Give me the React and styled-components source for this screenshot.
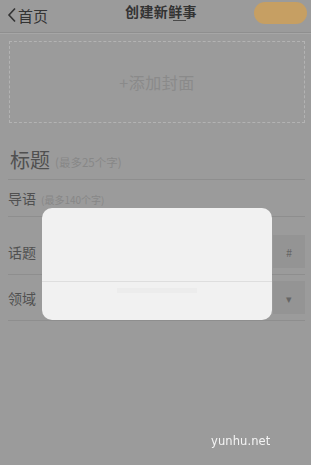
import React from "react";
import styled, { createGlobalStyle } from "styled-components";

const Global = createGlobalStyle`
  html, body { margin: 0; padding: 0; background: #9b9b9b; }
  body { font-family: "Noto Sans CJK SC", "Noto Sans", sans-serif; width: 311px; height: 465px; overflow: hidden; }
  * { box-sizing: border-box; }
`;

const Page = styled.div`
  width: 311px;
  height: 465px;
  display: flex;
  flex-direction: column;
  background: #9b9b9b;
`;

const Header = styled.header`
  height: 33px;
  display: grid;
  grid-template-columns: 1fr auto 1fr;
  align-items: center;
  padding: 0 4px 2px 7px;
  border-bottom: 1px solid #8f8f8f;
  box-shadow: 0 1px 0 #a6a6a6;
`;

const Back = styled.div`
  display: flex;
  align-items: center;
  gap: 1px;
  font-size: 15px;
  color: #333;
  line-height: 1;
`;

const Title = styled.div`
  position: relative;
  font-size: 14px;
  font-weight: 700;
  color: #333;
  letter-spacing: 0.4px;
  margin-top: -8px;
  margin-left: 8px;
`;

const Caret = styled.span`
  position: absolute;
  left: 48px;
  top: 19px;
  width: 13px;
  height: 1px;
  background: #4a4a4a;
`;

const Publish = styled.div`
  justify-self: end;
  width: 53px;
  height: 22px;
  border-radius: 11px;
  background: #c69f63;
  margin-top: -5px;
`;

const Cover = styled.div`
  margin: 8px 6px 0 9px;
  height: 82px;
  border: 1px dashed #b3b3b3;
  display: flex;
  align-items: center;
  justify-content: center;
  font-size: 16px;
  color: #8a8a8a;
  letter-spacing: 0.5px;
`;

const Field = styled.div`
  margin: 0 6px 0 8px;
  display: flex;
  align-items: center;
  height: ${(p) => p.$h}px;
  padding-top: ${(p) => p.$pt || 0}px;
  border-bottom: 1px solid #8e8e8e;
`;

const Label = styled.span`
  font-size: ${(p) => (p.$big ? 20 : 14)}px;
  color: #505050;
  padding-left: ${(p) => (p.$big ? 2 : 0)}px;
`;

const Hint = styled.span`
  font-size: ${(p) => (p.$big ? 11.5 : 10)}px;
  color: #878787;
  margin-left: 5px;
  margin-top: ${(p) => (p.$big ? 5 : 2)}px;
`;

const Spacer = styled.div`
  flex: 1;
`;

const SideBox = styled.div`
  width: 32px;
  height: 33px;
  background: #949494;
  display: flex;
  align-items: center;
  justify-content: center;
  font-size: 11px;
  color: #666;
`;

const Modal = styled.div`
  position: fixed;
  left: 42px;
  top: 208px;
  width: 230px;
  height: 112px;
  border-radius: 10px;
  background: #f1f1f1;
  display: flex;
  flex-direction: column;
  overflow: hidden;
`;

const ModalBody = styled.div`
  height: 74px;
  border-bottom: 1px solid #dedede;
`;

const ModalFoot = styled.div`
  flex: 1;
  display: flex;
  flex-direction: column;
  align-items: center;
  padding-top: 6px;
`;

const Faint = styled.div`
  width: 80px;
  height: 5px;
  background: #ececec;
`;

const Watermark = styled.div`
  position: fixed;
  left: 211px;
  top: 434px;
  font-family: "DejaVu Sans", sans-serif;
  font-size: 11.5px;
  color: #f4f4f4;
  letter-spacing: 0.1px;
`;

const Chevron = () => (
  <svg width="10" height="16" viewBox="0 0 10 16">
    <path d="M8 1.5 L2 8 L8 14.5" fill="none" stroke="#333" strokeWidth="1.6" />
  </svg>
);

export default function App() {
  return (
    <>
      <Global />
      <Page>
        <Header>
          <Back>
            <Chevron />
            首页
          </Back>
          <Title>
            创建新鲜事
            <Caret />
          </Title>
          <Publish />
        </Header>
        <Cover>+添加封面</Cover>
        <Field $h={57} $pt={16}>
          <Label $big>标题</Label>
          <Hint $big>(最多25个字)</Hint>
        </Field>
        <Field $h={37}>
          <Label>导语</Label>
          <Hint>(最多140个字)</Hint>
        </Field>
        <Field $h={58} $pt={12}>
          <Label>话题</Label>
          <Spacer />
          <SideBox>#</SideBox>
        </Field>
        <Field $h={46}>
          <Label>领域</Label>
          <Spacer />
          <SideBox>▾</SideBox>
        </Field>
      </Page>
      <Modal>
        <ModalBody />
        <ModalFoot>
          <Faint />
        </ModalFoot>
      </Modal>
      <Watermark>yunhu.net</Watermark>
    </>
  );
}
